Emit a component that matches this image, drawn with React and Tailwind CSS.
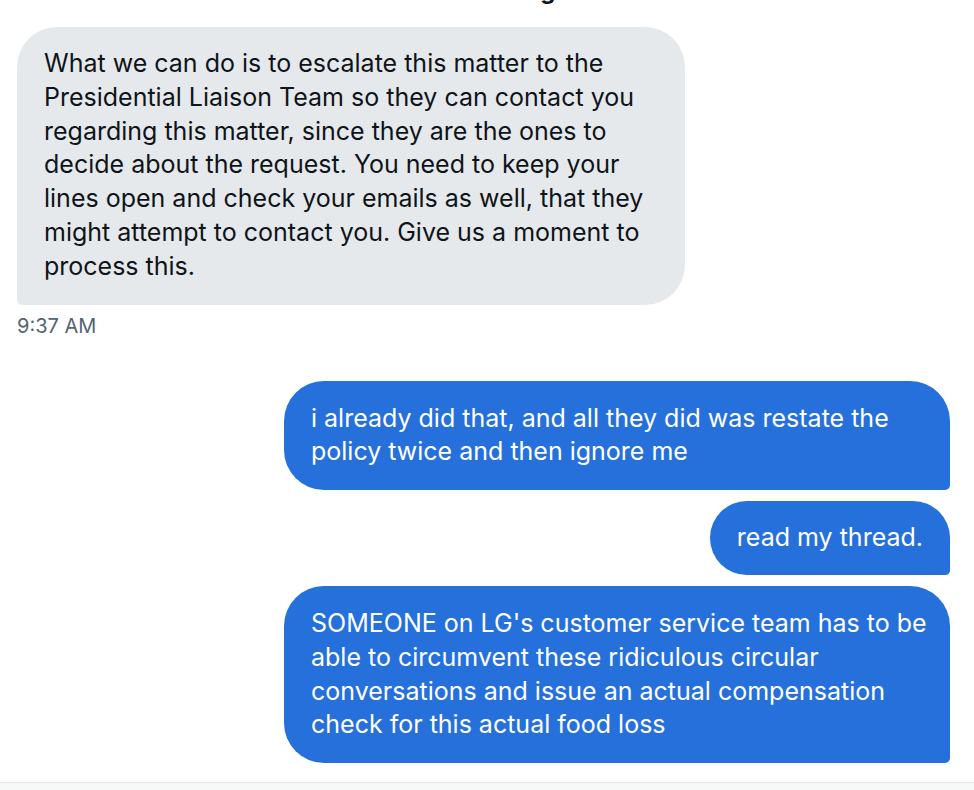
export default function App() {
  return (
    <div className="relative h-[790px] w-[974px] overflow-hidden bg-white font-['Inter','Liberation_Sans',sans-serif] text-[#0f1419]">
      {/* Title, scrolled mostly out of view */}
      <div className="flex h-[27px] justify-center">
        <span className="-mt-[23px] text-[24px] font-bold leading-[28px] text-[#0f1419]">New Message</span>
      </div>

      <div className="flex flex-col">
        {/* Received */}
        <div className="ml-[17px] w-[668px] rounded-[40px] rounded-bl-[5px] bg-[#e6e9ec] px-[27px] pb-[21px] pt-[20px] text-[25px] leading-[33.8px]">
          What we can do is to escalate this matter to the Presidential Liaison Team so they can contact you regarding this matter, since they are the ones to decide about the request. You need to keep your lines open and check your emails as well, that they might attempt to contact you. Give us a moment to process this.
        </div>
        <div className="ml-[17px] mt-[8px] text-[20px] leading-[26px] text-[#536471]">9:37 AM</div>

        {/* Sent */}
        <div className="mr-[24px] mt-[42px] flex flex-col items-end gap-[11px]">
          <div className="w-[666px] rounded-[40px] rounded-br-[5px] bg-[#2570db] pb-[21px] pl-[27px] pr-[20px] pt-[21px] text-[25px] leading-[33.8px] text-white">
            i already did that, and all they did was restate the policy twice and then ignore me
          </div>
          <div className="rounded-[40px] rounded-br-[5px] bg-[#2570db] px-[27px] pb-[20px] pt-[20px] text-[25px] leading-[33.8px] text-white">
            read my thread.
          </div>
          <div className="w-[666px] rounded-[40px] rounded-br-[5px] bg-[#2570db] pb-[21px] pl-[27px] pr-[20px] pt-[21px] text-[25px] leading-[33.8px] text-white">
            SOMEONE on LG's customer service team has to be able to circumvent these ridiculous circular conversations and issue an actual compensation check for this actual food loss
          </div>
        </div>
      </div>

      <div className="absolute bottom-0 left-0 h-[8px] w-full border-t border-[#e1e8ed] bg-[#f7f9f9]" />
    </div>
  );
}
